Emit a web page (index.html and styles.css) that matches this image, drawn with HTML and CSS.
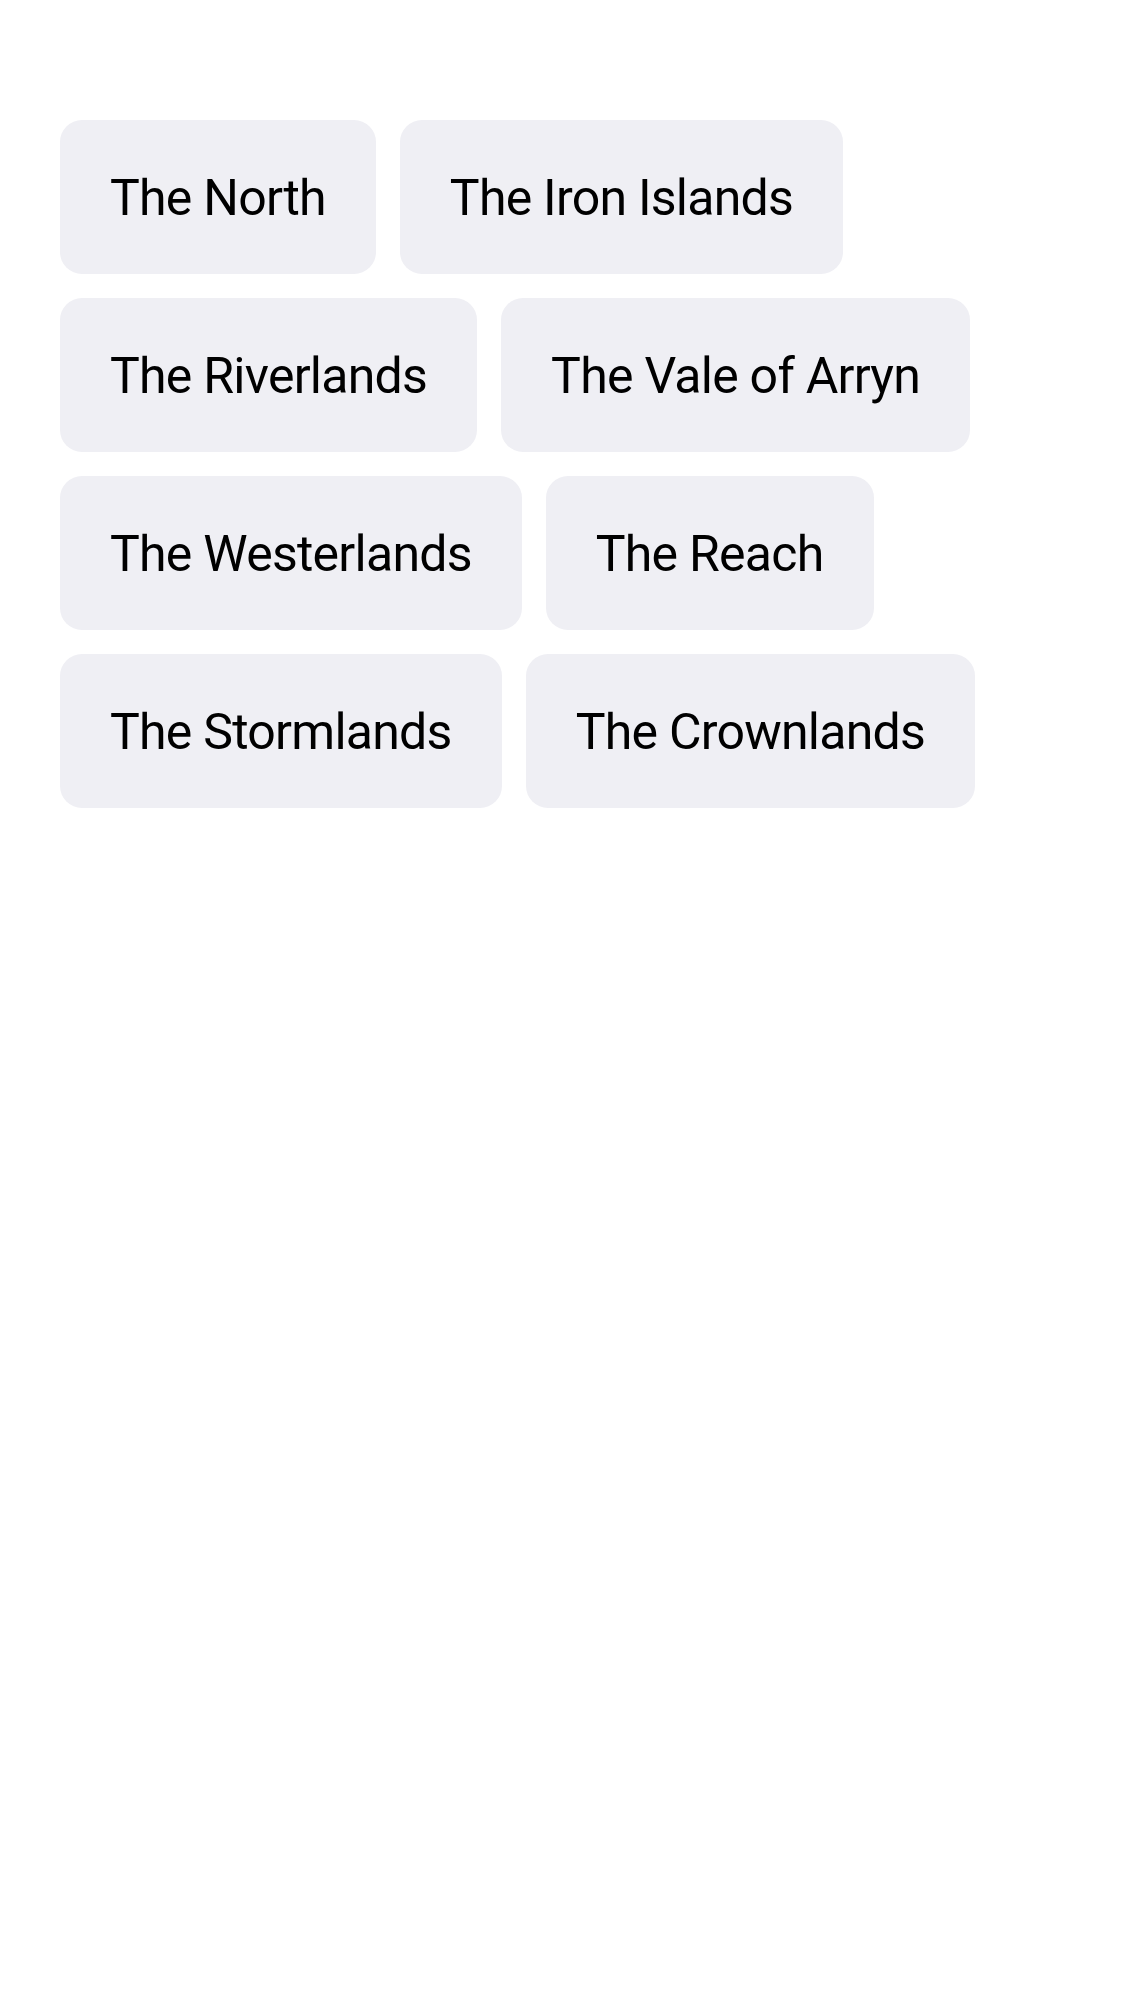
FILE: index.html
```html
<!DOCTYPE html>
<html lang="en">
<head>
<meta charset="utf-8">
<title>Regions</title>
<link rel="stylesheet" href="styles.css">
</head>
<body>
<div class="tags">
  <div class="tag">The North</div>
  <div class="tag">The Iron Islands</div>
  <div class="tag">The Riverlands</div>
  <div class="tag">The Vale of Arryn</div>
  <div class="tag">The Westerlands</div>
  <div class="tag">The Reach</div>
  <div class="tag">The Stormlands</div>
  <div class="tag">The Crownlands</div>
</div>
</body>
</html>
```
FILE: styles.css
```css
html, body {
  margin: 0;
  padding: 0;
  background: #ffffff;
}
body {
  font-family: Roboto, "Noto Sans", "Liberation Sans", sans-serif;
  color: #000000;
}
.tags {
  display: flex;
  flex-wrap: wrap;
  gap: 24px;
  padding: 120px 60px 0 60px;
}
.tag {
  display: flex;
  align-items: center;
  height: 154px;
  padding: 2px 50px 0 50px;
  background: #efeff4;
  border-radius: 22px;
  font-size: 50px;
  letter-spacing: -0.75px;
  white-space: nowrap;
  box-sizing: border-box;
}
```
